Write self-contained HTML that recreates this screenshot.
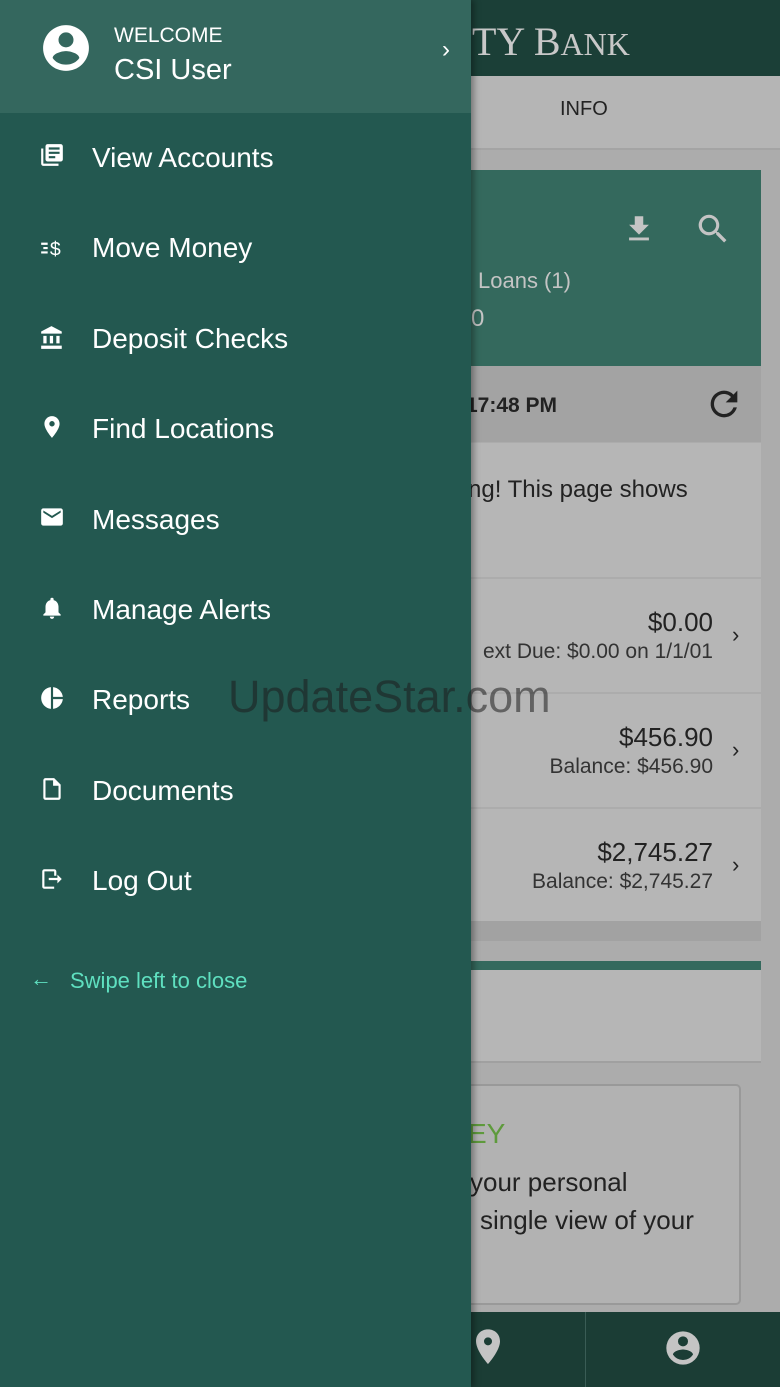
<!DOCTYPE html>
<html><head><meta charset="utf-8"><style>
*{margin:0;padding:0;box-sizing:border-box}
body{width:780px;height:1387px;overflow:hidden;position:relative;background:#acacac;font-family:"Liberation Sans",sans-serif}
.a{position:absolute}
.topbar{left:0;top:0;width:780px;height:76px;background:#1b3f37}
.tabs{left:0;top:76px;width:780px;height:74px;background:#b5b5b5;border-bottom:2px solid #a4a4a4}
.card{background:#b6b6b6}
.drawer{left:0;top:0;width:471px;height:1387px;background:#235850;box-shadow:3px 0 6px rgba(0,0,0,.35)}
.head{left:0;top:0;width:471px;height:113px;background:#34675e}
.item{left:92px;font-size:28px;color:#fff}
.ic{left:39px;width:26px;height:26px}
.dark{color:#222}
</style></head><body>
<div class="a topbar"></div>
<div class="a" style="left:472px;top:18px;font-family:'Liberation Serif',serif;font-size:40px;color:#c8c8c8">TY B<span style="font-size:32px">ANK</span></div>
<div class="a tabs"></div>
<div class="a dark" style="left:560px;top:98px;font-size:20px">INFO</div>
<div class="a" style="left:471px;top:170px;width:290px;height:196px;background:#34695d"></div>
<svg class="a" style="left:622px;top:212px" width="34" height="34" viewBox="0 0 24 24"><path d="M19 9h-4V3H9v6H5l7 7 7-7zM5 18v2h14v-2H5z" fill="#c4c4c4"/></svg>
<svg class="a" style="left:694px;top:210px" width="38" height="38" viewBox="0 0 24 24"><path d="M15.5 14h-.8l-.3-.3A6.5 6.5 0 1 0 9.5 16c1.6 0 3.1-.6 4.2-1.6l.3.3v.8l5 5 1.5-1.5-5-5zm-6 0C7 14 5 12 5 9.5S7 5 9.5 5 14 7 14 9.5 12 14 9.5 14z" fill="#c4c4c4"/></svg>
<div class="a" style="left:478px;top:268px;font-size:22px;color:#c4c4c4">Loans (1)</div>
<div class="a" style="left:471px;top:305px;font-size:24px;color:#c4c4c4">0</div>
<div class="a" style="left:471px;top:366px;width:290px;height:76px;background:#a3a3a3"></div>
<div class="a dark" style="left:466px;top:394px;font-size:21px;font-weight:bold">17:48 PM</div>
<svg class="a" style="left:704px;top:384px" width="40" height="40" viewBox="0 0 24 24"><path d="M17.65 6.35A7.96 7.96 0 0 0 12 4a8 8 0 1 0 7.73 10h-2.08A6 6 0 1 1 12 6c1.66 0 3.14.69 4.22 1.78L13 11h7V4l-2.35 2.35z" fill="#222"/></svg>
<div class="a card" style="left:471px;top:443px;width:290px;height:134px"></div>
<div class="a dark" style="left:468px;top:476px;font-size:24px">ng! This page shows</div>
<div class="a card" style="left:471px;top:579px;width:290px;height:113px"></div>
<div class="a card" style="left:471px;top:694px;width:290px;height:113px"></div>
<div class="a card" style="left:471px;top:809px;width:290px;height:112px"></div>
<div class="a" style="left:471px;top:921px;width:290px;height:20px;background:#a2a2a2"></div>
<div class="a dark" style="left:500px;top:607px;width:213px;text-align:right;font-size:26px">$0.00</div>
<div class="a" style="left:440px;top:640px;width:273px;text-align:right;font-size:21px;color:#333">ext Due: $0.00 on 1/1/01</div>
<div class="a dark" style="left:500px;top:722px;width:213px;text-align:right;font-size:26px">$456.90</div>
<div class="a" style="left:440px;top:755px;width:273px;text-align:right;font-size:21px;color:#333">Balance: $456.90</div>
<div class="a dark" style="left:500px;top:837px;width:213px;text-align:right;font-size:26px">$2,745.27</div>
<div class="a" style="left:440px;top:870px;width:273px;text-align:right;font-size:21px;color:#333">Balance: $2,745.27</div>
<div class="a dark" style="left:732px;top:622px;font-size:22px">›</div>
<div class="a dark" style="left:732px;top:737px;font-size:22px">›</div>
<div class="a dark" style="left:732px;top:852px;font-size:22px">›</div>
<div class="a" style="left:471px;top:961px;width:290px;height:9px;background:#34695d"></div>
<div class="a card" style="left:471px;top:970px;width:290px;height:93px;border-bottom:2px solid #a0a0a0"></div>
<div class="a" style="left:460px;top:1084px;width:281px;height:221px;border:2px solid #999;border-radius:5px;background:#b2b2b2"></div>
<div class="a" style="left:468px;top:1118px;font-size:28px;color:#5e9a3c">EY</div>
<div class="a dark" style="left:470px;top:1167px;font-size:26px">your personal</div>
<div class="a dark" style="left:480px;top:1205px;font-size:26px">single view of your</div>
<div class="a" style="left:440px;top:1312px;width:340px;height:75px;background:#1b3d35"></div>
<div class="a" style="left:585px;top:1312px;width:1px;height:75px;background:#3a5c55"></div>
<svg class="a" style="left:472px;top:1328px" width="32" height="40" viewBox="0 0 24 30"><path d="M12 1C6.5 1 3 5 3 10c0 7 9 17 9 17s9-10 9-17c0-5-3.5-9-9-9zm0 12a3 3 0 1 1 0-6 3 3 0 0 1 0 6z" fill="#c4c4c4"/></svg>
<svg class="a" style="left:663px;top:1328px" width="40" height="40" viewBox="0 0 24 24"><path d="M12 2a10 10 0 1 0 0 20 10 10 0 0 0 0-20zm0 3a3 3 0 1 1 0 6 3 3 0 0 1 0-6zm0 14.2a7.2 7.2 0 0 1-6-3.2c0-2 4-3.1 6-3.1s6 1.1 6 3.1a7.2 7.2 0 0 1-6 3.2z" fill="#c4c4c4"/></svg>

<div class="a drawer"></div>
<div class="a head"></div>
<svg class="a" style="left:41px;top:23px" width="50" height="50" viewBox="0 0 24 24"><path d="M12 1a11 11 0 1 0 0 22 11 11 0 0 0 0-22zm0 3.5a3.6 3.6 0 1 1 0 7.2 3.6 3.6 0 0 1 0-7.2zm0 15.5c-2.7 0-5.1-1.2-6.4-3.2C5.8 14.6 10 13.5 12 13.5s6.2 1.1 6.4 3.3c-1.3 2-3.7 3.2-6.4 3.2z" fill="#fff"/></svg>
<div class="a" style="left:114px;top:24px;font-size:21px;color:#fff">WELCOME</div>
<div class="a" style="left:114px;top:54px;font-size:29px;color:#fff">CSI User</div>
<div class="a" style="left:442px;top:36px;font-size:24px;color:#fff">›</div>

<svg class="a ic" style="top:142px" viewBox="0 0 24 24"><path d="M4 6H2v14a2 2 0 0 0 2 2h14v-2H4V6zm16-4H8a2 2 0 0 0-2 2v12a2 2 0 0 0 2 2h12a2 2 0 0 0 2-2V4a2 2 0 0 0-2-2zm-1 9H9V9h10v2zm-4 4H9v-2h6v2zm4-8H9V5h10v2z" fill="#fff"/></svg>
<div class="a item" style="top:142px">View Accounts</div>
<svg class="a ic" style="top:234px" viewBox="0 0 24 24"><path d="M2 8h6v2H2zM4 12h4v2H4zM2 16h6v2H2z" fill="#fff"/><text x="10" y="20" font-size="18" fill="#fff" font-family="Liberation Sans">$</text></svg>
<div class="a item" style="top:232px">Move Money</div>
<svg class="a ic" style="top:325px" viewBox="0 0 24 24"><path d="M4 10v7h3v-7H4zm6 0v7h3v-7h-3zM2 22h19v-3H2v3zm14-12v7h3v-7h-3zm-4.5-9L2 6v2h19V6l-9.5-5z" fill="#fff"/></svg>
<div class="a item" style="top:323px">Deposit Checks</div>
<svg class="a ic" style="top:414px" viewBox="0 0 24 24"><path d="M12 2C8.1 2 5 5.1 5 9c0 5.2 7 13 7 13s7-7.8 7-13c0-3.9-3.1-7-7-7zm0 9.5a2.5 2.5 0 1 1 0-5 2.5 2.5 0 0 1 0 5z" fill="#fff"/></svg>
<div class="a item" style="top:413px">Find Locations</div>
<svg class="a ic" style="top:504px" viewBox="0 0 24 24"><path d="M20 4H4a2 2 0 0 0-2 2v12a2 2 0 0 0 2 2h16a2 2 0 0 0 2-2V6a2 2 0 0 0-2-2zm0 4-8 5-8-5V6l8 5 8-5v2z" fill="#fff"/></svg>
<div class="a item" style="top:504px">Messages</div>
<svg class="a ic" style="top:595px" viewBox="0 0 24 24"><path d="M12 22a2 2 0 0 0 2-2h-4a2 2 0 0 0 2 2zm6-6v-5c0-3.1-1.6-5.6-4.5-6.3V4a1.5 1.5 0 0 0-3 0v.7C7.6 5.4 6 7.9 6 11v5l-2 2v1h16v-1l-2-2z" fill="#fff"/></svg>
<div class="a item" style="top:594px">Manage Alerts</div>
<svg class="a ic" style="top:685px" viewBox="0 0 24 24"><path d="M11 2v20c-5.1-.5-9-4.8-9-10s3.9-9.5 9-10zm2 0v9h9c-.5-4.7-4.3-8.5-9-9zm0 11v9c4.7-.5 8.5-4.3 9-9h-9z" fill="#fff"/></svg>
<div class="a item" style="top:684px">Reports</div>
<svg class="a ic" style="top:776px" viewBox="0 0 24 24"><path d="M14 2H6a2 2 0 0 0-2 2v16a2 2 0 0 0 2 2h12a2 2 0 0 0 2-2V8l-6-6zm4 18H6V4h7v5h5v11z" fill="#fff"/></svg>
<div class="a item" style="top:775px">Documents</div>
<svg class="a ic" style="top:866px" viewBox="0 0 24 24"><path d="M14 3H5a2 2 0 0 0-2 2v14a2 2 0 0 0 2 2h9v-2H5V5h9v4h2V5a2 2 0 0 0-2-2zm3 5v3H9v2h8v3l4-4-4-4z" fill="#fff"/></svg>
<div class="a item" style="top:865px">Log Out</div>
<div class="a" style="left:30px;top:966px;font-size:22px;color:#5fe0c0">←</div>
<div class="a" style="left:70px;top:968px;font-size:22px;color:#5fe0c0">Swipe left to close</div>

<div class="a" style="left:228px;top:671px;font-size:45px;color:rgba(30,30,30,.55)">UpdateStar.com</div>
</body></html>
